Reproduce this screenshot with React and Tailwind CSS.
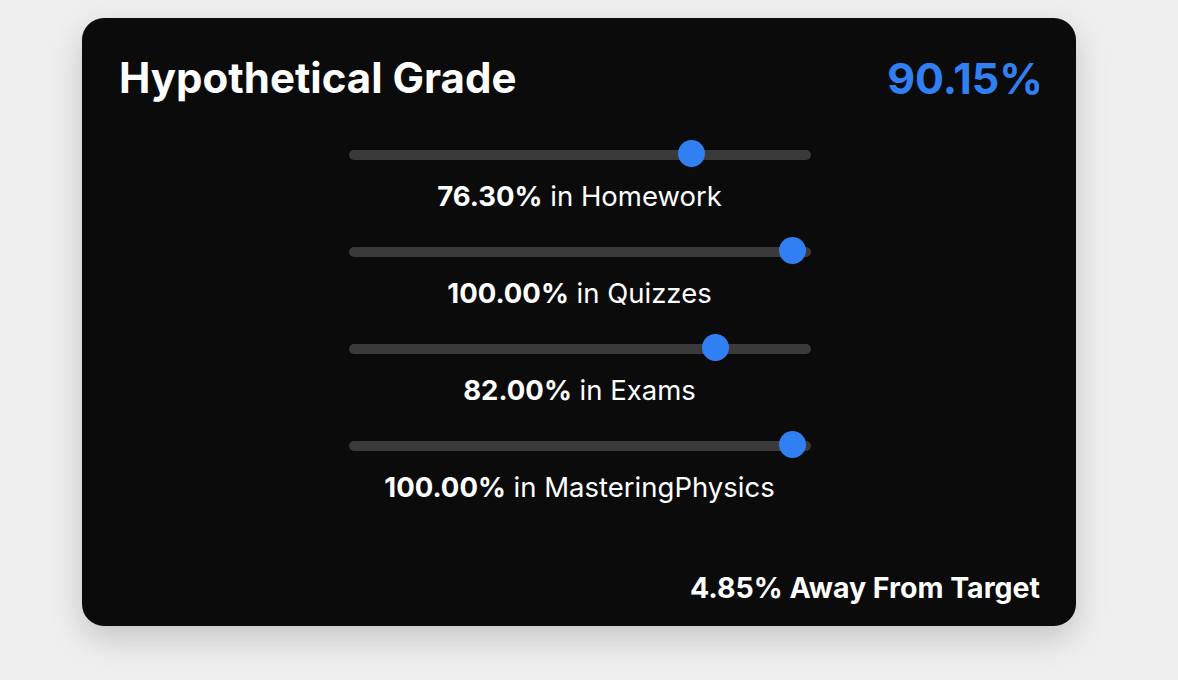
import React from "react";

const items = [
  { pct: 76.3, label: "Homework" },
  { pct: 100, label: "Quizzes" },
  { pct: 82, label: "Exams" },
  { pct: 100, label: "MasteringPhysics" },
];

function Slider({ pct }) {
  return (
    <div className="relative h-[28px] w-full">
      <div className="absolute left-0 right-0 top-[10px] h-[10px] rounded-full bg-[#3a3a3a]" />
      <div
        className="absolute top-0 h-[27px] w-[27px] rounded-full bg-[#3080f3]"
        style={{ left: `${4 + (pct / 100) * 426}px` }}
      />
    </div>
  );
}

export default function App() {
  return (
    <div
      className="min-h-[680px] w-full bg-[#efefef] pt-[18px] pl-[82px]"
      style={{ fontFamily: "Inter, 'Noto Sans', sans-serif" }}
    >
      <div className="flex h-[608px] w-[994px] flex-col rounded-[22px] bg-[#0b0b0b] pl-[37px] pr-[36px] pt-[36px] pb-[22px] text-white shadow-[0_12px_32px_rgba(0,0,0,0.18)]">
        <div className="flex items-center justify-between">
          <h1 className="text-[42px] leading-[48px] font-bold">Hypothetical Grade</h1>
          <div className="-mr-[3px] text-[43px] leading-[48px] font-bold text-[#3080f3]">90.15%</div>
        </div>
        <div className="mx-auto mt-[38px] flex w-[462px] flex-col">
          {items.map((it, i) => (
            <div key={i} className={i > 0 ? "mt-[25px]" : ""}>
              <Slider pct={it.pct} />
              <div className="mt-[12px] whitespace-nowrap text-center text-[27.5px] leading-[32px] -mx-[40px]">
                <span className="font-bold">{it.pct.toFixed(2)}%</span> in {it.label}
              </div>
            </div>
          ))}
        </div>
        <div className="mt-auto text-right text-[28.5px] leading-[32px] font-bold">4.85% Away From Target</div>
      </div>
    </div>
  );
}
